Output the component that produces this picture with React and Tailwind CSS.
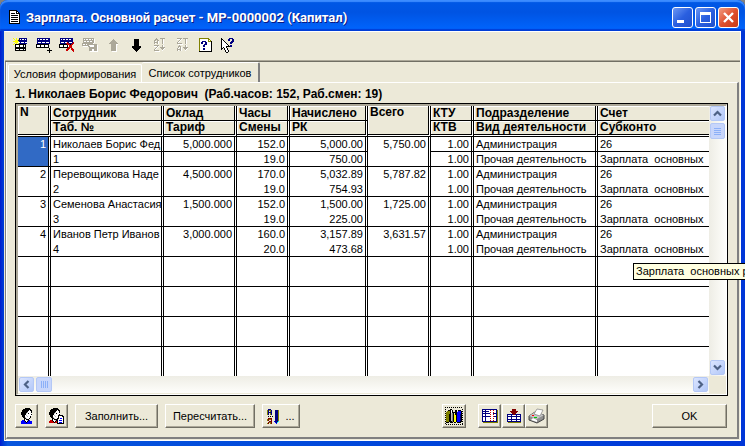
import React from "react";

const COLORS = {
  K: "#000000", B: "#000080", b: "#0000ff", w: "#ffffff", g: "#aca899", G: "#808080",
  s: "#c0c0c0", r: "#cc0000", R: "#800000", y: "#ffff00", o: "#808000", n: "#00c000", c: "#00ffff",
};

function Pixels({ rows }) {
  const width = Math.max(...rows.map((r) => r.length));
  const runs = [];
  rows.forEach((row, y) => {
    let x = 0;
    while (x < row.length) {
      let end = x + 1;
      while (end < row.length && row[end] === row[x]) end++;
      if (COLORS[row[x]]) runs.push({ x, y, w: end - x, fill: COLORS[row[x]] });
      x = end;
    }
  });
  return (
    <svg width={width} height={rows.length} viewBox={`0 0 ${width} ${rows.length}`} shapeRendering="crispEdges" aria-hidden="true" className="block shrink-0">
      {runs.map((p) => (
        <rect key={`${p.x}-${p.y}`} x={p.x} y={p.y} width={p.w} height="1" fill={p.fill} />
      ))}
    </svg>
  );
}

const DOC = [
  "KKKKKKKK...", "KwwwwwwKK..", "KwwwwwwKwK.", "KwKKKKwKKKK", "KwwwwwwwwwK", "KwKKKKKKKwK", "KwwwwwwwwwK",
  "KwKKKKKKKwK", "KwwwwwwwwwK", "KwKKKKKKKwK", "KwwwwwwwwwK", "KwKKKKKKKwK", "KwwwwwwwwwK", "KKKKKKKKKKK",
];

const TOOLS = [
  { name: "Новая строка", rows: [
    "", "y..y..BBBBBBBB", ".y.y.yBwBwwBwB", "..yyyBBBBBBBBB", "yyyyyyBBBBBBBB", "..yyywwBwwwBww", ".y.y.yBBBBBBBB", "y.KKKKKKKKKKK",
    "..KwwwKwwwKwK", "..KwwwKwwwKwK", "..KKKKKKKKKKK", "..KKKKKKKKKKK", "..KwwwKwwwKwK", "..KKKKKKKKKKK",
  ] },
  { name: "Вставить строку", rows: [
    "", ".BBBBBBBBBBBBB", ".BwBwwBwwBwwBB", ".BBBBBBBBBBBBB", ".BBBBBBBBBBBBB", ".BwwwBwwwBwwwB", ".BBBBBBBBBBBBB", "KKKKKKKKKKKKK",
    "KwwwKwwwKwwwK", "KwwwKwwwKwwwK", "KKKKKKKKKKKKK", ".............K", ".............K", "...........KKKKK", ".............K", ".............K",
  ] },
  { name: "Удалить строку", rows: [
    "", ".BBBBBBBBBBBBB", ".BwBwwBwwBwwBB", ".BBBBBBBBBBBBB", ".BBBBBBBBBBBBB", ".BwwwBwwrBwwwBr", ".BBBBBBrrrBBBrr", "KKKKKKKKrrrKrr",
    "KwwwKwwwKwrrr.", "KwwwKwwwKwrrr.", "KKKKKKKKKrrrr.", "........rrr.rr", ".......rrr..rrr", ".......rr....rr", "..............r",
  ] },
  { name: "Сохранить", rows: [
    "", ".ggggggggggg", ".gwgwwgwwgwgw", ".gggggggggggw", ".gwwgwwgwwggw", ".gggggggggggw", "gggggggggggw", "gwwgwgggggggggg",
    "gggggggwwwwwgggw", ".wwwwwggwwwwgggw", ".......ggggggggw", ".......ggggggggw", ".......gggwwgggw", ".......gggwwgggw", "........wwwwwwww",
  ] },
  { name: "Вверх", rows: [
    "", "", "........g", ".......ggg", "......ggggg", ".....ggggggg", "....ggggggggg", "......gggggww", "......gggggw", "......gggggw",
    "......gggggw", "......gggggw", "......gggggw", "......gggggw", ".......wwwww",
  ] },
  { name: "Вниз", rows: [
    "", "", "......KKKKK", "......KKKKK", "......KKKKK", "......KKKKK", "......KKKKK", "......KKKKK", "......KKKKK", "....KKKKKKKKK",
    "....KKKKKKKKK", ".....KKKKKKK", "......KKKKK", ".......KKK", "........K",
  ] },
  { name: "По возрастанию", rows: [
    "", ".....g...ggggg", "....ggg....gw", "...gg.gg...gw", "...gw.gw...gw", "...ggggw...gw", "...gw.gw...gw", "...............",
    "...ggggg...gw", "...wwwgw...gw", ".....gw..ggggg", "....gw....gggw", "...gw......gw", "...ggggg...w", "....wwwww",
  ] },
  { name: "По убыванию", rows: [
    "", "...ggggg.ggggg", "...wwwgw...gw", ".....gw....gw", "....gw.....gw", "...gw......gw", "...ggggg...gw", "....wwwww",
    ".....g.....gw", "....ggg....gw", "....gwgw.ggggg", "...gw.gw..gggw", "...ggggw...gw", "...gw.gw...w", "",
  ] },
  { name: "Описание", rows: [
    "", "..oooooooooo", "..owwwwwwwwoo", "..owwwwwwwwowo", "..owwBBBBwwoooK", "..owBBwwBBwwwwK", "..owBBwwBBwwwwK", "..owwwwBBBwwwwK", "..owwwBBwwwwwwK",
    "..owwwBBwwwwwwK", "..owwwwwwwwwwwK", "..owwwBBwwwwwwK", "..owwwBBwwwwwwK", "..owwwwwwwwwwwK", "..KKKKKKKKKKKKK",
  ] },
  { name: "Справка", rows: [
    "", ".K.......BBBB", ".KK.....BB..BB", ".KwK....BB..BB", ".KwwK......BBB", ".KwwwK....BBB", ".KwwwwK...BB", ".KwwwwwK", ".KwwwwwwK.BB", ".KwwwwKKKKBB",
    ".KwKwwK", ".KK.KwwK", ".K..KwwK", ".....KwwK", ".....KwwK", "......KK",
  ] },
];

const PERSON = [
  "....KKKKK...", "..KKKKKKKK..", ".KKKKKKKwKK.", ".KKKKKKwwwK.", "KKKKKKswwwK.", "KKKKKswKwww.", "KKKKKwwwwwK.", ".KKKwswwwww.",
  ".KKKwwswwK..", "..KKswwwwK..", "...KKswwK...", "...KwKKK....", ".bbKwwsKb...", "bbbbKwKbbbb.", "bbbbbKbbbbb.", "bbbbbbbbbbb.",
];
const PERSON_LIST = [
  "....KKKKK......", "..KKKKKKKK.....", ".KKKKKKKwKK....", ".KKKKKKwwwK....", "KKKKKKswwwK....", "KKKKKswKwww....", "KKKKKwwwwwK....", ".KKKwswwwKKKKK.",
  ".KKKwwswwKwwwKK", "..KKswwwwKwwwwK", "...KKswwKKwbbwK", "...KwKKKKwwwwwK", ".rrKwwsKKwbbbwK", "rrrrKwKrKwwwwwK", "rrrrrKrrKwbbbwK", "........KKKKKKK",
];
const SORT = [
  ".BBB........", "oBooB...BBBo", "oB.oB...BBBo", "oBBBB...BBBo", "oB.oB...BBBo", "oB.oB...BBBo", "........BBBo", ".K.K.K..BBBo",
  "........BBBo", ".RRRR...BBBo", "oRooR...BBBo", "oR..R...BBBo", "..RRR..bBBBc", ".RooR...bBc.", "oR.oR....b..",
];
const BOOKS = [
  "K.K.K.K.K.K.K.K.K.", "..................", "K....KK..........K", "...KKKwK..KK.KKK..", "K.oooKwK..KK.bbbKK", ".ooooKwKKKKKbbbbK.", "KooooKsGK.KKbbbbKK", ".oooKKsGKyKKbbbBK.", "KoooKKsGKyyKbbbBKK",
  ".oooKKsGKyyKbbbBK.", "KoooKKsGKyyKbbbBKK", ".oooKKsGKyyKbbbBK.", "KoooKKsGKyyKbbbBKK", ".oooKKsGKyyKbbbBK.", "KoooKKKGKyyKbbbKKK", ".KKK.KKK.KK.KKKK..", "K................K", ".K.K.K.K.K.K.K.K.K",
];
const SHEET = [
  "BBBBBBBBBBBBBBB.", "BwwBwwwwrwwrwwBo", "BBBBBBBwwwwwwwBo", "BwwBwwwwrwwrwwBo", "BBBBBBBBwwwBBBBo", "BwwBwwwwrwwrwwBo", "BwwBwwwwwwwwwwBo", "BBBBBBBBrwwrBBBo",
  "BwwBwwwwwwwwwwBo", "BwwBwwwwrwwrwwBo", "BwwBwwwwwwwwwwBo", "BwwBwwwwrwwrwwBo", "BBBBBBBBBBBBBBBo", ".ooooooooooooooo",
];
const INSERT = [
  ".....RRRR.....", ".....RRRR.....", "...RRRRRRRR...", "....RRRRRR....", ".....RRRR.....", "BBBBBBRRBBBBBB", "BwwwBwwwwBwwwB", "BBBBBBBBBBBBBB",
  "BwwwBwwwwBwwwB", "BwwwBwwwwBwwwB", "BBBBBBBBBBBBBB", "BwwwBwwwwBwwwB", "BBBBBBBBBBBBBB", ".ooooooooooooo",
];

const ROWS = [
  ["Николаев Борис Фед", "5,000.000", "152.0", "19.0", "5,000.00", "750.00", "5,750.00"],
  ["Перевощикова Наде", "4,500.000", "170.0", "19.0", "5,032.89", "754.93", "5,787.82"],
  ["Семенова Анастасия", "1,500.000", "152.0", "19.0", "1,500.00", "225.00", "1,725.00"],
  ["Иванов Петр Иванов", "3,000.000", "160.0", "20.0", "3,157.89", "473.68", "3,631.57"],
];

const cell = "h-[15px] overflow-hidden whitespace-pre bg-clip-padding border-black px-[2px] py-0 align-top leading-[14px] font-normal";
const sep = "border-r-3 [border-right-style:double]";
const head = "overflow-hidden whitespace-pre border-black bg-[#ece9d8] bg-clip-padding px-[2px] py-0 text-left align-top text-[12px] font-bold shadow-[inset_1px_1px_0_#fff]";
const headTop = "h-[15px] border-b leading-[14px]";
const headEnd = "h-4 border-b-3 [border-bottom-style:double] leading-[13px]";
const bevel = "flex h-6 shrink-0 items-center justify-center border border-t-white border-l-white border-r-[#716f64] border-b-[#716f64] bg-[#ece9d8] shadow-[inset_-1px_-1px_0_#aca899]";
const scrollBtn = "flex h-[15px] w-[15px] shrink-0 items-center justify-center rounded-[2px] border border-[#b4c8f6] bg-linear-to-br from-[#dbe5ff] to-[#b3c8f8]";
const caption = "flex h-[21px] w-[21px] items-center justify-center rounded-[3px] border border-white";

function Chevron({ d }) {
  return (
    <svg width="9" height="9" viewBox="0 0 9 9" aria-hidden="true">
      <path d={d} fill="none" stroke="#4d6185" strokeWidth="2.2" />
    </svg>
  );
}

function Employee({ row, index }) {
  const active = index === 0;
  const mid = active ? "border-b" : "";
  const [name, salary, hours, shifts, accrued, rk, total] = row;
  return (
    <>
      <tr>
        <td rowSpan={2} className={`${cell} ${sep} border-b text-right ${active ? "bg-[#316ac5] text-white" : ""}`}>{index + 1}</td>
        <td className={`${cell} ${sep} ${mid}`}>{name}</td>
        <td className={`${cell} ${sep} ${mid} text-right`}>{salary}</td>
        <td className={`${cell} ${sep} ${mid} text-right`}>{hours}</td>
        <td className={`${cell} ${sep} ${mid} text-right`}>{accrued}</td>
        <td rowSpan={2} className={`${cell} ${sep} border-b text-right`}>{total}</td>
        <td className={`${cell} ${sep} ${mid} text-right`}>1.00</td>
        <td className={`${cell} ${sep} ${mid}`}>Администрация</td>
        <td className={`${cell} ${mid}`}>26</td>
      </tr>
      <tr>
        <td className={`${cell} ${sep} border-b`}>{index + 1}</td>
        <td className={`${cell} ${sep} border-b`} />
        <td className={`${cell} ${sep} border-b text-right`}>{shifts}</td>
        <td className={`${cell} ${sep} border-b text-right`}>{rk}</td>
        <td className={`${cell} ${sep} border-b text-right`}>1.00</td>
        <td className={`${cell} ${sep} border-b`}>Прочая деятельность</td>
        <td className={`${cell} border-b`}>Зарплата  основных</td>
      </tr>
    </>
  );
}

function EmployeeTable() {
  return (
    <table className="w-full table-fixed border-separate border-spacing-0 bg-white">
      <colgroup>
        <col className="w-[33px]" />
        <col className="w-[113px]" />
        <col className="w-[73px]" />
        <col className="w-[53px]" />
        <col className="w-[78px]" />
        <col className="w-[63px]" />
        <col className="w-[43px]" />
        <col className="w-[124px]" />
        <col />
      </colgroup>
      <thead>
        <tr>
          <th rowSpan={2} className={`${head} ${sep} ${headEnd}`}>N</th>
          <th className={`${head} ${sep} ${headTop}`}>Сотрудник</th>
          <th className={`${head} ${sep} ${headTop}`}>Оклад</th>
          <th className={`${head} ${sep} ${headTop}`}>Часы</th>
          <th className={`${head} ${sep} ${headTop}`}>Начислено</th>
          <th rowSpan={2} className={`${head} ${sep} ${headEnd}`}>Всего</th>
          <th className={`${head} ${sep} ${headTop}`}>КТУ</th>
          <th className={`${head} ${sep} ${headTop}`}>Подразделение</th>
          <th className={`${head} ${headTop}`}>Счет</th>
        </tr>
        <tr>
          <th className={`${head} ${sep} ${headEnd}`}>Таб. №</th>
          <th className={`${head} ${sep} ${headEnd}`}>Тариф</th>
          <th className={`${head} ${sep} ${headEnd}`}>Смены</th>
          <th className={`${head} ${sep} ${headEnd}`}>РК</th>
          <th className={`${head} ${sep} ${headEnd}`}>КТВ</th>
          <th className={`${head} ${sep} ${headEnd}`}>Вид деятельности</th>
          <th className={`${head} ${headEnd}`}>Субконто</th>
        </tr>
      </thead>
      <tbody>
        {ROWS.map((row, i) => (
          <Employee key={row[0]} row={row} index={i} />
        ))}
        {[0, 1, 2, 3].map((r) => (
          <tr key={r}>
            {[0, 1, 2, 3, 4, 5, 6, 7].map((c) => (
              <td key={c} className={`h-[30px] border-black p-0 ${sep} ${r < 3 ? "border-b" : ""}`} />
            ))}
            <td className={`h-[30px] border-black p-0 ${r < 3 ? "border-b" : ""}`} />
          </tr>
        ))}
      </tbody>
    </table>
  );
}

export default function App() {
  return (
    <div className="relative min-h-screen overflow-hidden bg-[#808080] font-['Liberation_Sans',Arial,sans-serif] text-[11px] text-black">
      <div className="flex min-h-screen flex-col rounded-t-lg bg-linear-to-r from-[#0019cf] via-[#0855dd] via-[1%] to-[#0036d8] px-1 pb-[5px]">
        <header className="-mx-1 flex h-[31px] items-center gap-[6px] rounded-t-lg bg-linear-to-b from-[#0058e6] via-[#0054e3] via-40% to-[#0066ff] pr-[6px] pl-2 shadow-[inset_0_2px_1px_#3c8cff,inset_0_-2px_1px_#003dd7]">
          <div className="flex w-3 justify-center pt-[3px]">
            <Pixels rows={DOC} />
          </div>
          <h1 className="min-w-0 flex-1 truncate pt-[5px] font-[Roboto,'Noto_Sans',sans-serif] text-[13px] font-bold text-white [text-shadow:1px_1px_0_#0a1883]">
            Зарплата. Основной расчет - МР-0000002 (Капитал)
          </h1>
          <div className="flex gap-[2px] pt-1">
            <button aria-label="Свернуть" className={`${caption} bg-linear-to-br from-[#6d97f3] via-[#2a5fe0] to-[#2050cc]`}>
              <svg width="19" height="19" shapeRendering="crispEdges"><rect x="4" y="12" width="7" height="3" fill="#fff" /></svg>
            </button>
            <button aria-label="Развернуть" className={`${caption} bg-linear-to-br from-[#6d97f3] via-[#2a5fe0] to-[#2050cc]`}>
              <svg width="19" height="19" shapeRendering="crispEdges"><path d="M4 4h11v11H4zM5 7v7h9V7z" fill="#fff" fillRule="evenodd" /></svg>
            </button>
            <button aria-label="Закрыть" className={`${caption} bg-linear-to-br from-[#f09a80] via-[#e0512f] to-[#c83a14]`}>
              <svg width="19" height="19"><path d="M5 5l9 9M14 5l-9 9" stroke="#fff" strokeWidth="2.4" /></svg>
            </button>
          </div>
        </header>

        <main className="flex flex-1 flex-col border border-b-white border-t-white border-r-white border-l-[#ece9d8] bg-[#ece9d8]">
          <div role="toolbar" className="flex h-[28px] pl-1">
            {TOOLS.map((t) => (
              <button key={t.name} aria-label={t.name} className="flex w-[23px] items-start pt-[5px] pl-1">
                <Pixels rows={t.rows} />
              </button>
            ))}
          </div>
          <div className="h-[2px] border-t border-[#aca899] bg-[#716f64]" />

          <div className="flex flex-1 flex-col border-l border-[#808080] pr-px">
            <div role="tablist" className="flex h-5 items-end border-l border-white pl-px">
              <button role="tab" aria-selected="false" className="h-[18px] w-[134px] rounded-t-[2px] border-t border-r border-l border-white pt-px text-center whitespace-nowrap">
                Условия формирования
              </button>
              <button role="tab" aria-selected="true" className="-mb-px h-[21px] w-[118px] rounded-t-[2px] border-t border-r-2 border-t-white border-r-[#808080] bg-[#ece9d8] text-center whitespace-nowrap">
                Список сотрудников
              </button>
            </div>
            <section className="flex flex-1 flex-col border-t border-r-2 border-b-2 border-l border-t-white border-r-[#808080] border-b-[#808080] border-l-white pr-[9px] pl-2">
              <h2 className="h-5 pt-[3px] text-[12px] leading-4 font-bold whitespace-pre">
                1. Николаев Борис Федорович  (Раб.часов: 152, Раб.смен: 19)
              </h2>
              <div className="flex flex-1 flex-col border border-black">
                <div className="flex flex-1 flex-col border-t-2 border-r border-b border-l-2 border-t-[#aca899] border-r-white border-b-white border-l-[#aca899]">
                  <div className="flex flex-1">
                    <div className="h-[270px] min-w-0 flex-1 overflow-hidden">
                      <EmployeeTable />
                    </div>
                    <div className="flex w-[17px] flex-col items-center gap-[2px] bg-linear-to-r from-[#eeede5] to-[#fefefb] pb-px">
                      <button aria-label="Прокрутить вверх" className={scrollBtn}><Chevron d="M1 6.5L4.5 3L8 6.5" /></button>
                      <div className="flex h-4 w-[15px] flex-col items-center justify-center gap-px rounded-[2px] border border-[#b4c8f6] bg-[#c8d6fb]">
                        <i className="h-px w-[7px] bg-[#8cb0f8]" /><i className="h-px w-[7px] bg-[#8cb0f8]" /><i className="h-px w-[7px] bg-[#8cb0f8]" /><i className="h-px w-[7px] bg-[#8cb0f8]" />
                      </div>
                      <button aria-label="Прокрутить вниз" className={`${scrollBtn} mt-auto`}><Chevron d="M1 2.5L4.5 6L8 2.5" /></button>
                    </div>
                  </div>
                  <div className="flex h-[18px]">
                    <div className="flex h-[17px] flex-1 items-center gap-[2px] bg-linear-to-b from-[#eeede5] to-[#fefefb] px-px">
                      <button aria-label="Прокрутить влево" className={scrollBtn}><Chevron d="M6.5 1L3 4.5L6.5 8" /></button>
                      <div className="flex h-[15px] w-4 items-center justify-center gap-px rounded-[2px] border border-[#b4c8f6] bg-[#c8d6fb]">
                        <i className="h-[7px] w-px bg-[#8cb0f8]" /><i className="h-[7px] w-px bg-[#8cb0f8]" /><i className="h-[7px] w-px bg-[#8cb0f8]" /><i className="h-[7px] w-px bg-[#8cb0f8]" />
                      </div>
                      <button aria-label="Прокрутить вправо" className={`${scrollBtn} ml-auto`}><Chevron d="M2.5 1L6 4.5L2.5 8" /></button>
                    </div>
                    <div className="w-[17px]" />
                  </div>
                </div>
              </div>

              <footer className="flex pt-2 pr-px pb-[9px]">
                <div className="flex gap-[7px]">
                  <button aria-label="Сотрудник" className={`${bevel} w-[23px]`}><Pixels rows={PERSON} /></button>
                  <button aria-label="Список" className={`${bevel} w-[23px]`}><Pixels rows={PERSON_LIST} /></button>
                  <button className={`${bevel} w-[83px]`}>Заполнить...</button>
                  <button className={`${bevel} w-[90px]`}>Пересчитать...</button>
                  <button aria-label="Сортировка" className={`${bevel} w-[38px] gap-[6px]`}><Pixels rows={SORT} /><span>...</span></button>
                </div>
                <div className="mr-[104px] ml-auto flex">
                  <button aria-label="Журналы" className={`${bevel} mr-3 w-6`}><Pixels rows={BOOKS} /></button>
                  <button aria-label="Таблица" className={`${bevel} mr-px w-[23px]`}><Pixels rows={SHEET} /></button>
                  <button aria-label="Вставить" className={`${bevel} w-[23px]`}><Pixels rows={INSERT} /></button>
                  <button aria-label="Печать" className={`${bevel} w-[23px]`}>
                    <svg width="17" height="16" viewBox="0 0 17 16" aria-hidden="true">
                      <path d="M1 8L7 4L16 7V11L9 15L1 12Z" fill="#909090" stroke="#444" strokeWidth="1" />
                      <path d="M1 8L7 4L16 7L9 11Z" fill="#c8c8c8" />
                      <path d="M6 6L9 1L15 2L12 8Z" fill="#fff" stroke="#808080" strokeWidth=".7" />
                      <path d="M3 12L9 14V12L5 10Z" fill="#fff" />
                      <path d="M4 7h2v1H4z" fill="#f00" /><path d="M6 9h3v1H6z" fill="#0c0" />
                    </svg>
                  </button>
                </div>
                <button className={`${bevel} w-[75px]`}>OK</button>
              </footer>
            </section>
            <div className="h-px" />
          </div>
        </main>
      </div>

      <div role="tooltip" className="absolute top-[263px] left-[633px] h-[17px] border border-black bg-[#ffffe1] px-[2px] leading-[15px] whitespace-pre">
        Зарплата  основных рабочих
      </div>
    </div>
  );
}
